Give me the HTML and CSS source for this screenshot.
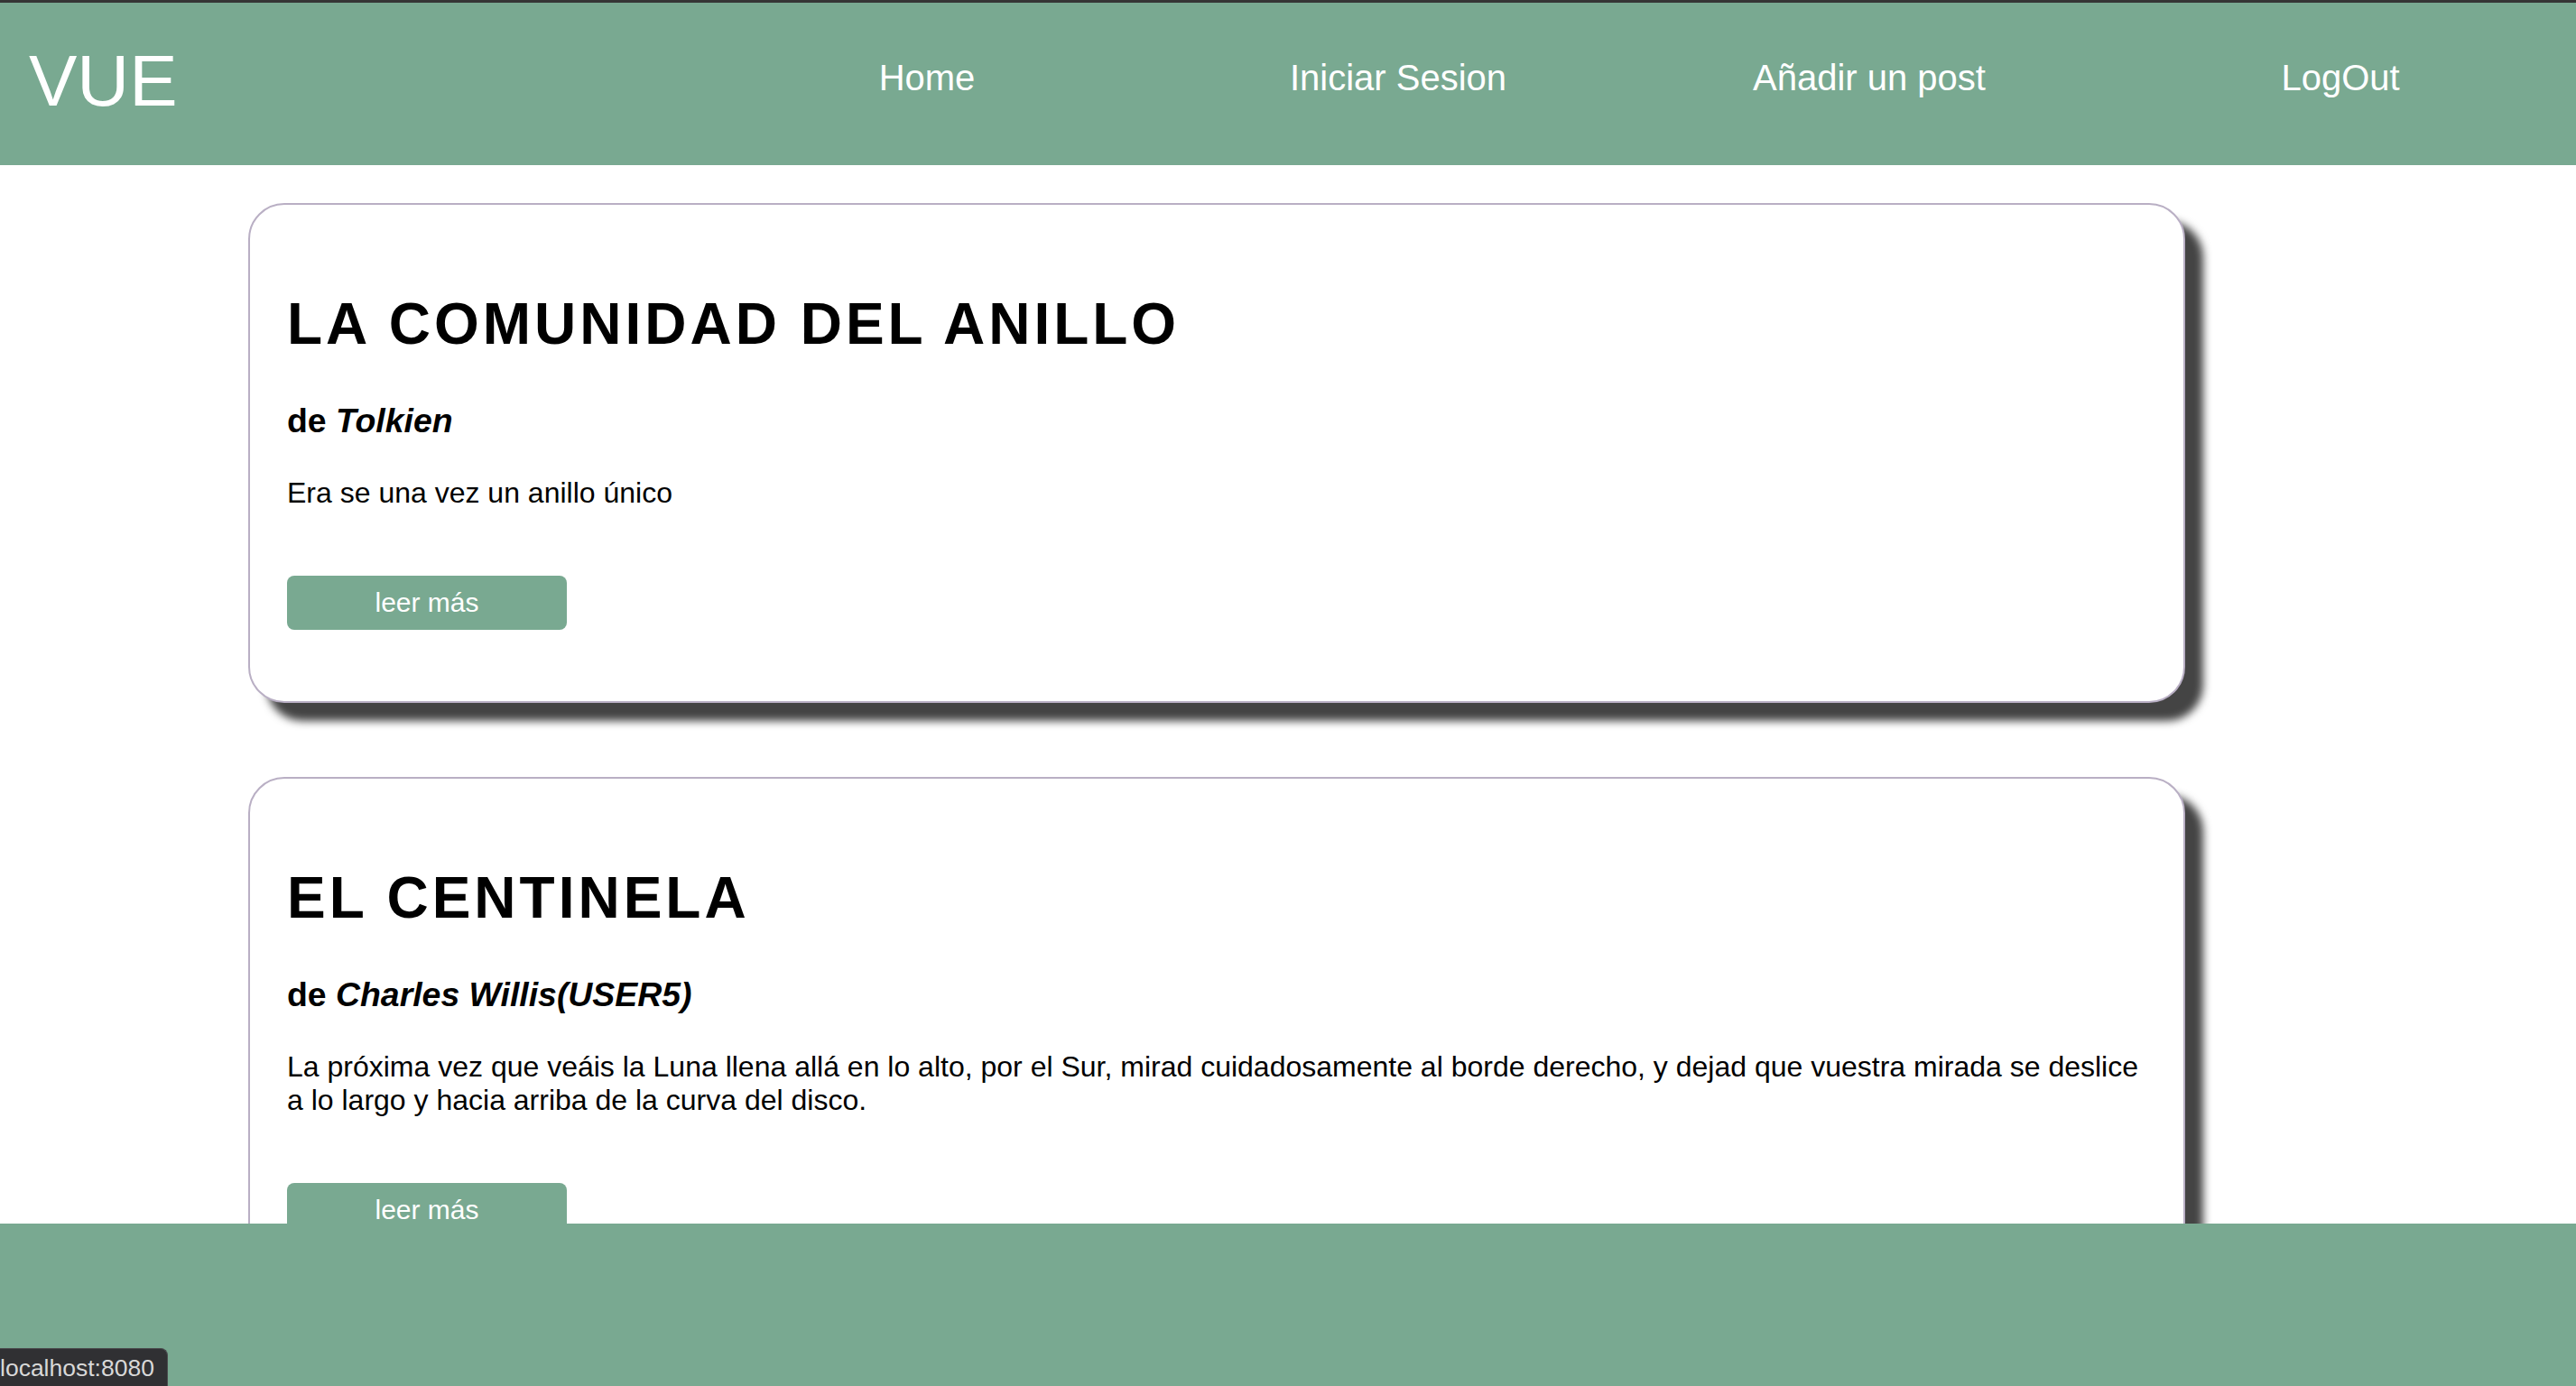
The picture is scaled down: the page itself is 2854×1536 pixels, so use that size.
FILE: index.html
```html
<!DOCTYPE html>
<html lang="es">
<head>
<meta charset="utf-8">
<title>VUE</title>
<link rel="stylesheet" href="styles.css">
</head>
<body>
<header class="topbar">
  <div class="logo">VUE</div>
  <nav class="nav">
    <a class="nav-link" href="#">Home</a>
    <a class="nav-link" href="#">Iniciar Sesion</a>
    <a class="nav-link" href="#">Añadir un post</a>
    <a class="nav-link" href="#">LogOut</a>
  </nav>
</header>
<main class="posts">
  <article class="card">
    <h1 class="card-title">LA COMUNIDAD DEL ANILLO</h1>
    <h3 class="card-author">de <em>Tolkien</em></h3>
    <p class="card-text">Era se una vez un anillo único</p>
    <button class="btn">leer más</button>
  </article>
  <article class="card">
    <h1 class="card-title">EL CENTINELA</h1>
    <h3 class="card-author">de <em>Charles Willis(USER5)</em></h3>
    <p class="card-text">La próxima vez que veáis la Luna llena allá en lo alto, por el Sur, mirad cuidadosamente al borde derecho, y dejad que vuestra mirada se deslice a lo largo y hacia arriba de la curva del disco.</p>
    <button class="btn">leer más</button>
  </article>
</main>
<footer class="footer"></footer>
<div class="status">localhost:8080</div>
</body>
</html>
```
FILE: styles.css
```css
* { box-sizing: border-box; }
html, body {
  margin: 0;
  padding: 0;
}
body {
  font-family: "Liberation Sans", Arial, Helvetica, sans-serif;
  color: #000;
  background: #fff;
}
.topbar {
  display: flex;
  align-items: flex-start;
  height: 183px;
  background: #79a991;
  border-top: 3px solid #353535;
}
.logo {
  flex: 1;
  padding-left: 32px;
  margin-top: 41px;
  font-size: 80px;
  line-height: 92px;
  color: #fff;
}
.nav {
  display: grid;
  grid-template-columns: repeat(4, 522px);
  margin-top: 60px;
}
.nav-link {
  text-align: center;
  font-size: 40px;
  line-height: 46px;
  color: #fff;
  text-decoration: none;
}
.posts {
  display: flex;
  flex-direction: column;
  gap: 82px;
  padding: 42px 0 0 275px;
}
.card {
  width: 2146px;
  padding: 95px 41px 79px;
  border: 2px solid #b9afc4;
  border-radius: 40px;
  background: #fff;
  box-shadow: 20px 20px 10px #444;
}
.card-title {
  margin: 0;
  font-size: 64px;
  line-height: 74px;
  font-weight: bold;
  letter-spacing: 4px;
}
.card-author {
  margin: 48px 0 0;
  font-size: 37.4px;
  line-height: 44px;
  font-weight: bold;
}
.card-author em {
  font-style: italic;
}
.card-text {
  margin: 40px 0 0;
  font-size: 32px;
  line-height: 37px;
}
.btn {
  display: block;
  margin-top: 73px;
  width: 310px;
  height: 60px;
  border: none;
  border-radius: 8px;
  background: #79a991;
  color: #fff;
  font-family: "Liberation Sans", Arial, sans-serif;
  font-size: 30px;
  padding: 0;
}
.footer {
  position: fixed;
  left: 0;
  right: 0;
  bottom: 0;
  height: 180px;
  background: #79a991;
}
.status {
  position: fixed;
  left: 0;
  bottom: 0;
  width: 186px;
  height: 42px;
  background: #303033;
  border-top: 1px solid #4a4a4d;
  border-right: 1px solid #4a4a4d;
  border-top-right-radius: 8px;
  color: #d8d8d8;
  font-size: 26.5px;
  line-height: 42px;
  white-space: nowrap;
  overflow: hidden;
}
```
